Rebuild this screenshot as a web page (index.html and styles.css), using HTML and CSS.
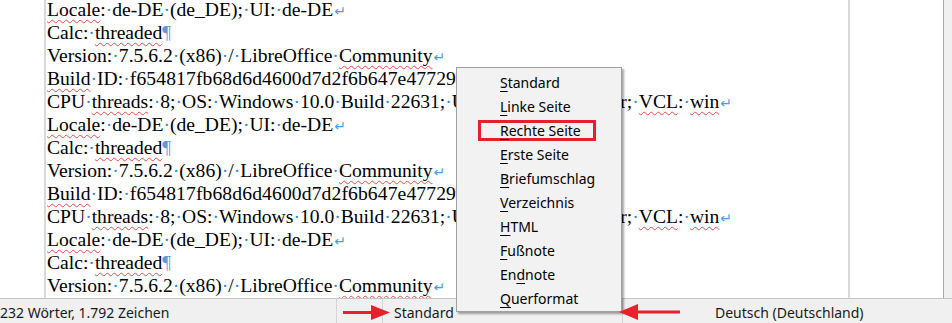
FILE: index.html
```html
<!DOCTYPE html>
<html lang="de">
<head>
    <meta charset="UTF-8">
    <meta name="viewport" content="width=device-width, initial-scale=1.0">
    <title>Writer</title>
    <link rel="stylesheet" href="styles.css">
</head>
<body>
    <div class="window">
        <div class="workspace">
            <div class="gutter"></div>
            <div class="text-area">
                <p><span class="err">Locale</span>:<i>·</i>de-DE<i>·</i>(de_DE);<i>·</i>UI:<i>·</i>de-DE<b>↵</b></p>
                <p>Calc:<i>·</i><span class="err">threaded</span><em>¶</em></p>
                <p>Version:<i>·</i>7.5.6.2<i>·</i>(x86)<i>·</i>/<i>·</i>LibreOffice<i>·</i><span class="err">Community</span><b>↵</b></p>
                <p><span class="err">Build</span><i>·</i>ID:<i>·</i><span class="hash">f654817fb68d6d4600d7d2f6b647e47729f55f15</span><b>↵</b></p>
                <p>CPU<i>·</i><span class="err">threads</span>:<i>·</i>8;<i>·</i>OS:<i>·</i>Windows<i>·</i>10.0<i>·</i>Build<i>·</i>22631;<i>·</i><span class="tight">UI<i>·</i>render:<i>·</i>Skia/Raste</span>r;<i>·</i><span class="err">VCL</span>:<i>·</i><span class="err">win</span><b>↵</b></p>
                <p><span class="err">Locale</span>:<i>·</i>de-DE<i>·</i>(de_DE);<i>·</i>UI:<i>·</i>de-DE<b>↵</b></p>
                <p>Calc:<i>·</i><span class="err">threaded</span><em>¶</em></p>
                <p>Version:<i>·</i>7.5.6.2<i>·</i>(x86)<i>·</i>/<i>·</i>LibreOffice<i>·</i><span class="err">Community</span><b>↵</b></p>
                <p><span class="err">Build</span><i>·</i>ID:<i>·</i><span class="hash">f654817fb68d6d4600d7d2f6b647e47729f55f15</span><b>↵</b></p>
                <p>CPU<i>·</i><span class="err">threads</span>:<i>·</i>8;<i>·</i>OS:<i>·</i>Windows<i>·</i>10.0<i>·</i>Build<i>·</i>22631;<i>·</i><span class="tight">UI<i>·</i>render:<i>·</i>Skia/Raste</span>r;<i>·</i><span class="err">VCL</span>:<i>·</i><span class="err">win</span><b>↵</b></p>
                <p><span class="err">Locale</span>:<i>·</i>de-DE<i>·</i>(de_DE);<i>·</i>UI:<i>·</i>de-DE<b>↵</b></p>
                <p>Calc:<i>·</i><span class="err">threaded</span><em>¶</em></p>
                <p>Version:<i>·</i>7.5.6.2<i>·</i>(x86)<i>·</i>/<i>·</i>LibreOffice<i>·</i><span class="err">Community</span><b>↵</b></p>
            </div>
            <div class="page-margin"></div>
            <div class="canvas"></div>
        </div>

        <div class="statusbar">
            <div class="cell words">232 Wörter, 1.792 Zeichen</div>
            <div class="cell spacer"></div>
            <div class="cell page-style">Standard</div>
            <div class="cell language">Deutsch (Deutschland)</div>
        </div>

        <!-- Kontextmenü der Seitenvorlagen -->
        <ul class="menu">
            <li><u>S</u>tandard</li>
            <li><u>L</u>inke Seite</li>
            <li><span class="marked"><u>R</u>echte Seite</span></li>
            <li><u>E</u>rste Seite</li>
            <li><u>B</u>riefumschlag</li>
            <li><u>V</u>erzeichnis</li>
            <li><u>H</u>TML</li>
            <li><u>F</u>ußnote</li>
            <li>En<u>d</u>note</li>
            <li><u>Q</u>uerformat</li>
        </ul>

        <svg class="arrows" width="952" height="323" viewBox="0 0 952 323">
            <line x1="343" y1="312.5" x2="376" y2="312.5" stroke="#e8202a" stroke-width="3"/>
            <polygon points="371,305 390,312.5 371,320" fill="#e8202a"/>
            <line x1="634" y1="312" x2="680" y2="312" stroke="#e8202a" stroke-width="3"/>
            <polygon points="638,304 619,312 638,320" fill="#e8202a"/>
        </svg>
    </div>
</body>
</html>
```

FILE: styles.css
```css
body {
    margin: 0;
    padding: 0;
    background-color: #f0f0f0;
    overflow: hidden;
}

.window {
    position: relative;
    width: 952px;
    height: 323px;
    display: flex;
    flex-direction: column;
    overflow: hidden;
}

.workspace {
    height: 301px;
    display: flex;
    background-color: #fff;
}

.gutter {
    width: 44px;
    flex-shrink: 0;
}

.text-area {
    width: 801px;
    flex-shrink: 0;
    border-left: 2px solid #d9d9d9;
    border-right: 2px solid #d9d9d9;
    padding-left: 1px;
    overflow: hidden;
    font-family: "Liberation Serif", serif;
    font-size: 19.6px;
    line-height: 23px;
    color: #000;
}

.text-area p {
    margin: 0;
    height: 23px;
    white-space: nowrap;
}

.text-area p:first-child {
    margin-top: -2px;
}

.text-area i {
    font-style: normal;
    color: #3a86d0;
}

.text-area b {
    font-weight: normal;
    font-family: "DejaVu Sans", sans-serif;
    font-size: 14px;
    line-height: 0;
    color: #4d9be0;
    margin-left: 1px;
}

.text-area em {
    font-style: normal;
    color: #5b9bd5;
}

.hash {
    letter-spacing: 0.12px;
}

.tight {
    letter-spacing: -0.22px;
}

.err {
    text-decoration: underline wavy #e84a4a;
    text-decoration-thickness: 1px;
    text-underline-offset: 3px;
    text-decoration-skip-ink: none;
}

.page-margin {
    width: 93px;
    flex-shrink: 0;
    border-right: 1px solid #a8a8a8;
}

.canvas {
    flex: 1;
    background-color: #f0f0f0;
}

.statusbar {
    flex: 1;
    display: flex;
    border-top: 1px solid #c4c4c4;
    background-color: #f0f0f0;
    font-family: "Noto Sans", sans-serif;
    font-size: 14px;
    line-height: 20px;
    color: #1a1a1a;
}

.statusbar .cell {
    padding-top: 4px;
    white-space: nowrap;
    border-right: 1px solid #d4d4d4;
}

.words {
    width: 336px;
}

.spacer {
    width: 45px;
}

.page-style {
    width: 228px;
    padding-left: 11px;
}

.language {
    flex: 1;
    padding-left: 92px;
    border-right: none !important;
}

.menu {
    position: absolute;
    left: 456px;
    top: 67px;
    width: 164px;
    margin: 0;
    padding: 3px 0 0 0;
    height: 240px;
    list-style: none;
    background-color: #f2f2f2;
    border: 1px solid #a0a0a0;
    box-shadow: 2px 2px 2px rgba(0, 0, 0, 0.35);
    font-family: "Noto Sans", sans-serif;
    font-size: 14px;
    color: #000;
}

.menu li {
    height: 24px;
    line-height: 24px;
    padding-left: 43px;
    white-space: nowrap;
}

.menu u {
    text-underline-offset: 3px;
}

.marked {
    display: inline-block;
    margin-left: -22px;
    padding: 0 12px 0 19px;
    height: 15px;
    line-height: 15px;
    border: 3px solid #e5202a;
}

.arrows {
    position: absolute;
    left: 0;
    top: 0;
    pointer-events: none;
}
```
